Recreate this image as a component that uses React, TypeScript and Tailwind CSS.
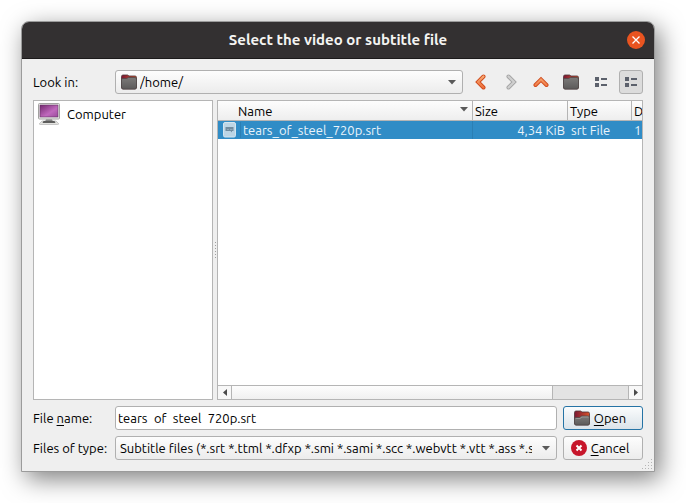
import { useState, type ReactNode } from "react";

function FolderIcon({ open = false }: { open?: boolean }) {
  return (
    <svg className="w-4 h-4 shrink-0" viewBox="0 0 16 16" aria-hidden="true">
      <defs>
        <linearGradient id="tab" x1="0" x2="1">
          <stop offset="0" stopColor="#7a1733" />
          <stop offset="1" stopColor="#d9542b" />
        </linearGradient>
        <linearGradient id="front" x1="0" x2="0" y1="0" y2="1">
          <stop offset="0" stopColor="#7c7a79" />
          <stop offset="1" stopColor="#5c5a5a" />
        </linearGradient>
      </defs>
      <path d="M.5 2.5Q.5 1 2 1H6.5L8 2H14Q15.5 2 15.5 3.5V13Q15.5 15 14 15H2Q.5 15 .5 13Z" fill="url(#tab)" stroke="#4a3135" strokeWidth=".8" />
      {open ? (
        <path d="M.5 9Q.5 7.5 2 7.5H5.5L7.5 6H14Q15.5 6 15.5 7.5V13Q15.5 15 14 15H2Q.5 15 .5 13Z" fill="url(#front)" stroke="#514a4a" strokeWidth=".8" />
      ) : (
        <path d="M.5 5.5Q.5 4.5 2 4.5H5.5L7.5 3.5H14Q15.5 3.5 15.5 5V13Q15.5 15 14 15H2Q.5 15 .5 13Z" fill="url(#front)" stroke="#514a4a" strokeWidth=".8" />
      )}
      {open && <path d="M1.5 9Q1.5 8.5 2.5 8.5H6L8 7H14.5" fill="none" stroke="#aaa6a5" strokeWidth=".7" />}
    </svg>
  );
}

function ComputerIcon() {
  return (
    <svg className="w-[22px] h-[22px] shrink-0" viewBox="0 0 22 22" aria-hidden="true">
      <defs>
        <linearGradient id="screen" x1="0" x2="1" y1="0" y2="1">
          <stop offset="0" stopColor="#74286f" />
          <stop offset=".6" stopColor="#c069bd" />
          <stop offset="1" stopColor="#9a4a9c" />
        </linearGradient>
      </defs>
      <rect x=".5" y=".5" width="21" height="15.500" rx="1" fill="#f0f0ee" stroke="#a2a2a0" />
      <rect x="2" y="2" width="18" height="12" fill="url(#screen)" stroke="#60305f" strokeWidth=".6" />
      <path d="M8 16.500H14L15 18.500H7Z" fill="#777" />
      <path d="M4 18H18L20.500 20.500Q21 21.500 19.500 21.500H2.500Q1 21.500 1.500 20.500Z" fill="#e3e3e0" stroke="#aaa" strokeWidth=".6" />
      <path d="M5.500 18.300H16.500L17.500 19.700H4.500Z" fill="#333" />
    </svg>
  );
}

function SubtitleIcon() {
  return (
    <svg className="w-[13px] h-4" viewBox="0 0 13 16" aria-hidden="true">
      <rect x=".5" y=".5" width="12" height="14.500" rx="1.500" fill="#bcd5e5" stroke="#d3e5f0" />
      <path d="M2.500 5H10.500V9H9V10.500L7.500 9H2.500Z" fill="#718c9f" />
      <path d="M4 7.500H6M7 7.500H9.500" stroke="#8fa9bb" />
    </svg>
  );
}

const chevrons = {
  left: "M10.500 2.500L5 8L10.500 13.500",
  right: "M5.500 2.500L11 8L5.500 13.500",
  up: "M2.500 11L8 5.500L13.500 11",
};

function Chevron({ direction, disabled }: { direction: keyof typeof chevrons; disabled?: boolean }) {
  return (
    <svg className="w-4 h-4" viewBox="0 0 16 16" fill="none" strokeLinecap="round" strokeLinejoin="miter" aria-hidden="true">
      <defs>
        <linearGradient id="orange" gradientUnits="userSpaceOnUse" x1="0" x2="0" y1="1" y2="15">
          <stop offset="0" stopColor="#f9b27c" />
          <stop offset="1" stopColor="#ee6a35" />
        </linearGradient>
      </defs>
      <path d={chevrons[direction]} stroke={disabled ? "#a4a4a4" : "#cf4a1c"} strokeWidth="4" />
      <path d={chevrons[direction]} stroke={disabled ? "#cfcfcf" : "url(#orange)"} strokeWidth="2.200" />
    </svg>
  );
}

function ListIcon() {
  return (
    <svg className="w-3 h-[10px]" viewBox="0 0 12 10" fill="#5c616c" aria-hidden="true">
      <path d="M0 0H4V4H0ZM0 6H4V10H0ZM6 1H12V3H6ZM6 7H12V9H6Z" />
    </svg>
  );
}

function DownArrow() {
  return (
    <svg className="w-2 h-[5px]" viewBox="0 0 8 5" aria-hidden="true">
      <path d="M0 0H8L4 4.500Z" fill="#5a5a5a" />
    </svg>
  );
}

interface ToolButtonProps {
  label: string;
  active?: boolean;
  disabled?: boolean;
  children: ReactNode;
}

function ToolButton({ label, active, disabled, children }: ToolButtonProps) {
  return (
    <button
      aria-label={label}
      disabled={disabled}
      className={`w-6 h-6 shrink-0 flex items-center justify-center rounded-[3px] border ${
        active ? "bg-[#dcdcdc] border-[#b0b0b0]" : "border-transparent"
      }`}
    >
      {children}
    </button>
  );
}

interface ComboProps {
  id: string;
  value: string;
  icon?: ReactNode;
}

function Combo({ id, value, icon }: ComboProps) {
  return (
    <div className="relative flex-1 min-w-0 h-6">
      {icon && <span className="absolute left-[6px] top-1 pointer-events-none">{icon}</span>}
      <select
        id={id}
        className={`w-full h-6 appearance-none rounded-[3px] border border-[#b0b0b0] bg-linear-to-b from-[#fdfdfd] to-[#ececec] pr-6 outline-none ${
          icon ? "pl-6" : "pl-1"
        }`}
      >
        <option>{value}</option>
      </select>
      <span className="absolute right-[7px] top-[10px] pointer-events-none">
        <DownArrow />
      </span>
    </div>
  );
}

export default function App() {
  const [fileName, setFileName] = useState("tears_of_steel_720p.srt");

  return (
    <div className="overflow-hidden bg-white pt-[21px] pl-[21px] pr-[31px] pb-[31px] font-['Ubuntu','Noto_Sans',sans-serif] text-[13px] leading-4 text-black">
      <div className="rounded-t-lg border border-[#9b9b9b] bg-[#efefef] shadow-[5px_7px_24px_rgba(0,0,0,0.5)]">
        {/* title bar */}
        <header className="h-[37px] grid grid-cols-[1fr_auto_1fr] items-center rounded-t-[7px] bg-[#333031] border-b border-[#1c1a1b] px-[9px]">
          <h1 className="col-start-2 text-[15px] leading-5 font-bold text-[#f4f4f2]">Select the video or subtitle file</h1>
          <button aria-label="Close" className="w-[18px] h-[18px] justify-self-end rounded-full bg-[#e95420] flex items-center justify-center">
            <svg className="w-2 h-2" viewBox="0 0 8 8" stroke="#fff" strokeWidth="1.300" aria-hidden="true">
              <path d="M.5 .5L7.500 7.500M7.500 .5L.5 7.500" />
            </svg>
          </button>
        </header>

        <main className="relative flex flex-col gap-[6px] p-[11px]">
          <div className="flex items-center gap-[6px]">
            <label htmlFor="look-in" className="w-19 shrink-0">Look in:</label>
            <Combo id="look-in" value="/home/" icon={<FolderIcon />} />
            <ToolButton label="Back"><Chevron direction="left" /></ToolButton>
            <ToolButton label="Forward" disabled><Chevron direction="right" disabled /></ToolButton>
            <ToolButton label="Parent directory"><Chevron direction="up" /></ToolButton>
            <ToolButton label="Create new folder"><FolderIcon /></ToolButton>
            <ToolButton label="List view"><ListIcon /></ToolButton>
            <ToolButton label="Detail view" active><ListIcon /></ToolButton>
          </div>

          <div className="flex h-75">
            <aside className="w-45 shrink-0 border border-[#b5b5b5] bg-white">
              <button className="w-full flex items-center gap-[7px] pl-1 pt-[2px] text-left">
                <ComputerIcon />
                Computer
              </button>
            </aside>

            {/* splitter handle */}
            <div className="w-1 shrink-0 flex flex-col justify-center items-center gap-[2px]">
              {[0, 1, 2, 3, 4, 5].map((dot) => (
                <i key={dot} className="w-px h-px bg-[#a0a0a0]" />
              ))}
            </div>

            <section className="flex-1 min-w-0 flex flex-col border border-[#b5b5b5] bg-white">
              <div className="flex-1 overflow-hidden">
                <table className="w-full table-fixed border-separate border-spacing-0 whitespace-nowrap">
                  <colgroup>
                    <col />
                    <col className="w-[95px]" />
                    <col className="w-16" />
                    <col className="w-[10px]" />
                  </colgroup>
                  <thead>
                    <tr className="h-5 bg-linear-to-b from-[#fdfdfd] to-[#ededed] text-left">
                      <th className="relative p-0 pl-5 font-normal border-r border-b border-[#b5b5b5]">
                        Name
                        <span className="absolute right-1 top-[6px]"><DownArrow /></span>
                      </th>
                      <th className="p-0 pl-[2px] font-normal border-r border-b border-[#b5b5b5]">Size</th>
                      <th className="p-0 pl-[2px] font-normal border-r border-b border-[#b5b5b5]">Type</th>
                      <th className="p-0 pl-[2px] font-normal border-b border-[#b5b5b5] overflow-hidden">D</th>
                    </tr>
                  </thead>
                  <tbody>
                    <tr className="h-[18px] bg-[#308cc6] text-[#eaf4fb]">
                      <td className="p-0 pl-[5px] border-r border-[#2b7fb4]">
                        <div className="flex items-center gap-1">
                          <SubtitleIcon />
                          <span className="flex-1 pl-[2px] border-l border-[#2b7fb4]">{fileName}</span>
                        </div>
                      </td>
                      <td className="p-0 pr-[3px] text-right">4,34 KiB</td>
                      <td className="p-0 pl-[3px]">srt File</td>
                      <td className="p-0 pl-[2px] overflow-hidden">1</td>
                    </tr>
                  </tbody>
                </table>
              </div>

              {/* horizontal scroll bar */}
              <div className="h-[14px] shrink-0 flex border-t border-[#b5b5b5] bg-[#e3e3e3]">
                <button aria-label="Scroll left" className="w-[14px] flex items-center justify-center bg-[#f7f7f7] border-r border-[#b5b5b5]">
                  <svg className="w-1 h-[7px]" viewBox="0 0 4 7" aria-hidden="true"><path d="M4 0V7L0 3.500Z" fill="#4a4a4a" /></svg>
                </button>
                <div className="flex-1">
                  <div className="w-[81%] h-full bg-linear-to-b from-[#fdfdfd] to-[#f0f0f0] border-r border-[#b5b5b5]" />
                </div>
                <button aria-label="Scroll right" className="w-[14px] flex items-center justify-center bg-[#f7f7f7] border-l border-[#b5b5b5]">
                  <svg className="w-1 h-[7px]" viewBox="0 0 4 7" aria-hidden="true"><path d="M0 0V7L4 3.500Z" fill="#4a4a4a" /></svg>
                </button>
              </div>
            </section>
          </div>

          <div className="flex items-center gap-[6px]">
            <label htmlFor="file-name" className="w-19 shrink-0">File <u className="underline-offset-2">n</u>ame:</label>
            <input
              id="file-name"
              value={fileName}
              onChange={(e) => setFileName(e.target.value)}
              className="flex-1 min-w-0 h-6 rounded-[3px] border border-[#b0b0b0] bg-white px-[2px] leading-[22px] outline-none"
              spellCheck={false}
            />
            <button className="w-20 h-6 shrink-0 flex items-center justify-center gap-1 pr-[6px] rounded-[3px] border border-[#2573a5] bg-linear-to-b from-[#fafcfd] to-[#dbe3e9]">
              <FolderIcon open />
              <span><u className="underline-offset-2">O</u>pen</span>
            </button>
          </div>

          <div className="flex items-center gap-[6px]">
            <label htmlFor="file-type" className="w-19 shrink-0">Files of type:</label>
            <Combo id="file-type" value="Subtitle files (*.srt *.ttml *.dfxp *.smi *.sami *.scc *.webvtt *.vtt *.ass *.ssa)" />
            <button className="w-20 h-6 shrink-0 flex items-center justify-center gap-1 pr-[6px] rounded-[3px] border border-[#b0b0b0] bg-linear-to-b from-[#fdfdfd] to-[#ececec]">
              <svg className="w-4 h-4" viewBox="0 0 16 16" aria-hidden="true">
                <circle cx="8" cy="8" r="8" fill="#c7162b" />
                <path d="M5.500 5.500L10.500 10.500M10.500 5.500L5.500 10.500" stroke="#fff" strokeWidth="2" />
              </svg>
              <span><u className="underline-offset-2">C</u>ancel</span>
            </button>
          </div>

          {/* resize grip */}
          <svg className="absolute right-[2px] bottom-[2px] w-[10px] h-[10px]" viewBox="0 0 10 10" fill="#b5b5b5" aria-hidden="true">
            <path d="M9 0h1v1h-1zM9 3h1v1h-1zM6 3h1v1h-1zM9 6h1v1h-1zM6 6h1v1h-1zM3 6h1v1h-1zM9 9h1v1h-1zM6 9h1v1h-1zM3 9h1v1h-1zM0 9h1v1h-1z" />
          </svg>
        </main>
      </div>
    </div>
  );
}
